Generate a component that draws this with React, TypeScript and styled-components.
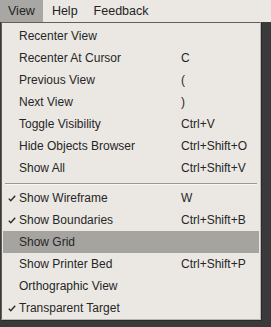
import React from 'react';
import styled, { createGlobalStyle } from 'styled-components';

const Global = createGlobalStyle`
  html, body { margin: 0; padding: 0; background: #3a3a3a; }
  body { font-family: "Liberation Sans", Arial, sans-serif; }
`;

const Page = styled.div`
  width: 271px;
  height: 327px;
  background: #3a3a3a;
  overflow: hidden;
`;

const MenuBar = styled.div`
  display: flex;
  height: 22px;
  background: #ebe8e4;
  font-size: 12.5px;
  color: #222;
`;

const BarItem = styled.div<{ $open?: boolean }>`
  display: flex;
  align-items: center;
  padding: 0 ${(p) => (p.$open ? '8px' : '8px')};
  margin-right: ${(p) => (p.$open ? '1px' : '0')};
  background: ${(p) => (p.$open ? '#a9a7a3' : 'transparent')};
`;

const Dropdown = styled.div`
  margin-left: 1px;
  width: 258px;
  background: #ebe8e4;
  border-top: 1px solid #5e5e5c;
  border-left: 1px solid #5e5e5c;
  border-right: 1px solid #b8b6b2;
  border-bottom: 1px solid #b8b6b2;
  padding: 2px 0 0;
  box-shadow: 1px 1px 0 #2a2a2a;
`;

const Row = styled.div<{ $active?: boolean }>`
  display: grid;
  grid-template-columns: 16px 162px 1fr;
  align-items: center;
  height: 22px;
  margin: 0 1px;
  font-size: 12px;
  color: #262626;
  background: ${(p) => (p.$active ? '#a6a4a0' : 'transparent')};
`;

const Check = styled.span`
  display: flex;
  justify-content: center;
  padding-left: 1px;
`;

const Label = styled.span`
  white-space: nowrap;
`;

const Shortcut = styled.span`
  white-space: nowrap;
`;

const Separator = styled.div`
  height: 8px;
  display: flex;
  align-items: center;
  padding: 0 3px;
  &::after {
    content: '';
    flex: 1;
    height: 1px;
    background: #9a9895;
    box-shadow: 0 1px 0 #f8f6f3;
  }
`;

const CheckMark = () => (
  <svg width="8" height="7" viewBox="0 0 8 7">
    <path d="M0.8 3.6 L2.8 5.8 L7.2 0.8" fill="none" stroke="#2a2a2a" strokeWidth="1.4" />
  </svg>
);

type Item = { label: string; key?: string; checked?: boolean; active?: boolean } | 'sep';

const items: Item[] = [
  { label: 'Recenter View' },
  { label: 'Recenter At Cursor', key: 'C' },
  { label: 'Previous View', key: '(' },
  { label: 'Next View', key: ')' },
  { label: 'Toggle Visibility', key: 'Ctrl+V' },
  { label: 'Hide Objects Browser', key: 'Ctrl+Shift+O' },
  { label: 'Show All', key: 'Ctrl+Shift+V' },
  'sep',
  { label: 'Show Wireframe', key: 'W', checked: true },
  { label: 'Show Boundaries', key: 'Ctrl+Shift+B', checked: true },
  { label: 'Show Grid', active: true },
  { label: 'Show Printer Bed', key: 'Ctrl+Shift+P' },
  { label: 'Orthographic View' },
  { label: 'Transparent Target', checked: true },
];

export default function App() {
  return (
    <Page>
      <Global />
      <MenuBar>
        <BarItem $open>View</BarItem>
        <BarItem>Help</BarItem>
        <BarItem>Feedback</BarItem>
      </MenuBar>
      <Dropdown>
        {items.map((it, i) =>
          it === 'sep' ? (
            <Separator key={i} />
          ) : (
            <Row key={i} $active={it.active}>
              <Check>{it.checked && <CheckMark />}</Check>
              <Label>{it.label}</Label>
              <Shortcut>{it.key}</Shortcut>
            </Row>
          )
        )}
      </Dropdown>
    </Page>
  );
}
